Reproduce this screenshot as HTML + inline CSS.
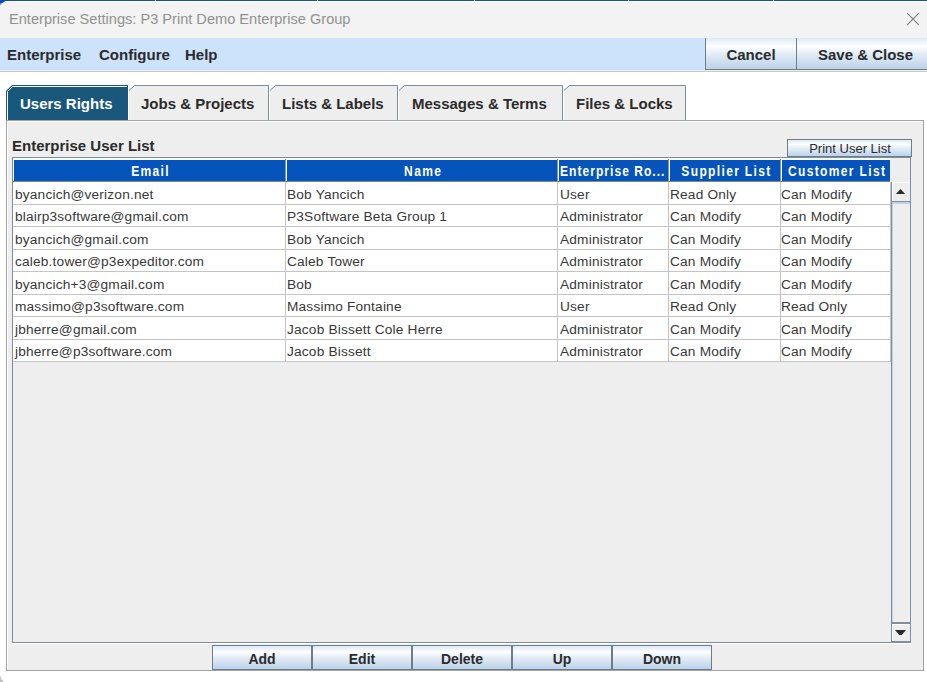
<!DOCTYPE html>
<html><head><meta charset="utf-8">
<style>
*{margin:0;padding:0;box-sizing:border-box}
html,body{width:927px;height:682px;overflow:hidden;background:#fff;font-family:"Liberation Sans",sans-serif}
.a{position:absolute}
#topstrip{left:0;top:0;width:927px;height:2px;background:#1d4f91}
#cornerbg{left:0;top:0;width:12px;height:12px;background:linear-gradient(#0a4fae 0%,#0a4fae 22%,#7d98b8 32%,#b9cde3 45%,#d5dde6 100%)}
#title{left:0;top:1px;width:927px;height:37px;background:#f3f3f3;border-top-left-radius:8px;box-shadow:inset 0 1px 0 #fcfcfc}
#titletext{left:9px;top:10px;font-size:14.6px;color:#919191;white-space:nowrap;line-height:18px}
#menubar{left:0;top:38px;width:927px;height:33px;background:#cde2fb;border-bottom:1px solid #ececec}
#menuline{left:0;top:71px;width:927px;height:1px;background:#c9c9c9}
.menu{top:39px;height:32px;line-height:32px;font-size:15px;font-weight:bold;color:#2b2b2b;white-space:nowrap}
.btn{background:linear-gradient(#dde9f5 0%,#fdfeff 27%,#e4edf6 50%,#bbd2ea 100%);border:1px solid #6d7d8c;text-align:center;font-weight:bold;color:#2b2b2b;white-space:nowrap}
.tablbl{top:86.5px;height:34px;font-size:15px;font-weight:bold;color:#2b2b2b;line-height:34px;white-space:nowrap}
#panel{left:6px;top:120px;width:918px;height:551px;background:#eeeeee;border:1px solid #a3a3a3;box-shadow:inset 1px 1px 0 #fff}
.cell{position:absolute;font-size:13.7px;letter-spacing:0.18px;color:#383838;white-space:nowrap;line-height:22px;margin-top:2px}
.hd{position:absolute;top:160px;height:21px;background:#0454bb;color:#fff;font-weight:bold;font-size:14px;letter-spacing:1.55px;line-height:23px;padding-left:3px;text-align:center;white-space:nowrap;overflow:hidden}
.hs{display:inline-block;transform:scaleX(0.86);transform-origin:50% 50%;margin:0 -30px}
</style></head><body>
<div id="topstrip" class="a"></div>
<div id="cornerbg" class="a"></div>
<div class="a" style="left:155px;top:0;width:1px;height:2px;background:#b9c3cf"></div><div class="a" style="left:317px;top:0;width:1px;height:2px;background:#b9c3cf"></div><div class="a" style="left:474px;top:0;width:1px;height:2px;background:#b9c3cf"></div><div class="a" style="left:628px;top:0;width:1px;height:2px;background:#b9c3cf"></div><div class="a" style="left:773px;top:0;width:1px;height:2px;background:#b9c3cf"></div>
<div id="title" class="a"></div>
<div id="titletext" class="a">Enterprise Settings: P3 Print Demo Enterprise Group</div>
<svg class="a" style="left:905px;top:11px" width="16" height="16" viewBox="0 0 16 16"><path d="M2.2 2.2 L13.8 13.8 M13.8 2.2 L2.2 13.8" stroke="#7a7a7a" stroke-width="1.1"/></svg>
<div id="menubar" class="a"></div>
<div id="menuline" class="a"></div>
<div class="a menu" style="left:7px">Enterprise</div>
<div class="a menu" style="left:99px">Configure</div>
<div class="a menu" style="left:185px">Help</div>
<div class="a btn" style="left:705px;top:38px;width:91px;height:32px;line-height:34px;font-size:15px;border-top:none;border-right:none">Cancel</div>
<div class="a btn" style="left:796px;top:38px;width:138px;height:32px;line-height:34px;font-size:15px;border-top:none;border-right:none">Save &amp; Close</div>

<div id="panel" class="a"></div>
<!--TABS-->
<svg class="a" style="left:0;top:0" width="927" height="130">
<path d="M128 120 L128 91 L134 85 L269 85 L269 120 Z" fill="#eeeeee"/>
<path d="M128.5 120 L128.5 91" stroke="#ffffff" stroke-width="1" fill="none"/>
<path d="M129 90.5 L134.5 85.5 L268.5 85.5 L268.5 120" stroke="#7b8c9c" stroke-width="1" fill="none"/>
<path d="M269 120 L269 91 L275 85 L398 85 L398 120 Z" fill="#eeeeee"/>
<path d="M269.5 120 L269.5 91" stroke="#ffffff" stroke-width="1" fill="none"/>
<path d="M270 90.5 L275.5 85.5 L397.5 85.5 L397.5 120" stroke="#7b8c9c" stroke-width="1" fill="none"/>
<path d="M398 120 L398 91 L404 85 L563 85 L563 120 Z" fill="#eeeeee"/>
<path d="M398.5 120 L398.5 91" stroke="#ffffff" stroke-width="1" fill="none"/>
<path d="M399 90.5 L404.5 85.5 L562.5 85.5 L562.5 120" stroke="#7b8c9c" stroke-width="1" fill="none"/>
<path d="M563 120 L563 91 L569 85 L686 85 L686 120 Z" fill="#eeeeee"/>
<path d="M563.5 120 L563.5 91" stroke="#ffffff" stroke-width="1" fill="none"/>
<path d="M564 90.5 L569.5 85.5 L685.5 85.5 L685.5 120" stroke="#7b8c9c" stroke-width="1" fill="none"/>
<path d="M6 120 L6 91 L12 85 L128 85 L128 120 Z" fill="#1a577c"/>
<path d="M7.5 120 L7.5 91.5 L12.5 86.5 L127 86.5" stroke="#ffffff" stroke-width="1" fill="none"/>
</svg>
<div class="a tablbl" style="left:141px">Jobs &amp; Projects</div>
<div class="a tablbl" style="left:282px">Lists &amp; Labels</div>
<div class="a tablbl" style="left:412px">Messages &amp; Terms</div>
<div class="a tablbl" style="left:576px">Files &amp; Locks</div>
<div class="a tablbl" style="left:20px;color:#fff">Users Rights</div>

<div class="a" style="left:12px;top:137px;font-size:15px;font-weight:bold;color:#2b2b2b;line-height:18px">Enterprise User List</div>
<div class="a btn" style="left:787px;top:139px;width:125px;height:18px;font-size:13px;font-weight:normal;line-height:18px;color:#2b2b2b;padding-left:1px">Print User List</div>

<!-- scroll pane -->
<div class="a" style="left:12px;top:157px;width:899px;height:486px;border:1px solid #7d8c9a;background:#eeeeee;box-shadow:0 1px 0 #fff"></div>
<div class="a" style="left:13px;top:158px;width:878px;height:2px;background:#fff"></div>
<div id="rows" class="a" style="left:13px;top:182px;width:877px;height:180px;background:#fff"></div>

<!-- scrollbar -->
<div class="a" style="left:891px;top:182px;width:20px;height:460px;background:#eeeeee;border-left:1px solid #7d8fa0;border-right:1px solid #7d8fa0"></div>
<div class="a" style="left:892px;top:203px;width:1px;height:419px;background:#bcd3ea"></div>
<div class="a" style="left:892px;top:201px;width:18px;height:1px;background:#7d8fa0"></div>
<div class="a" style="left:892px;top:202px;width:18px;height:2px;background:#bcd3ea"></div>
<div class="a" style="left:892px;top:622px;width:18px;height:2px;background:#7d8fa0"></div>
<svg class="a" style="left:895px;top:187px" width="11" height="8"><path d="M0.9 6.9 L10.1 6.9 L5.5 1.9 Z" fill="#2a2a2a"/></svg>
<svg class="a" style="left:894px;top:629px" width="13" height="8"><path d="M1 1 L12.1 1 L7.7 6 L5.3 6 Z" fill="#2a2a2a"/></svg>
<div class="a" style="left:892px;top:182px;width:18px;height:1px;background:#fff"></div>
<div class="a" style="left:892px;top:182px;width:1px;height:19px;background:#fff"></div>
<div class="a" style="left:892px;top:624px;width:18px;height:1px;background:#fff"></div>
<div class="a" style="left:892px;top:624px;width:1px;height:17px;background:#fff"></div>
<div class="a" style="left:892px;top:641px;width:19px;height:1px;background:#7d8fa0"></div>
<div class="a" style="left:890px;top:182px;width:1px;height:180px;background:#c4c4c4"></div>
<!-- bottom buttons -->
<div class="a btn" style="left:212px;top:645px;width:100px;height:25px;font-size:14px;line-height:27px">Add</div>
<div class="a btn" style="left:312px;top:645px;width:100px;height:25px;font-size:14px;line-height:27px">Edit</div>
<div class="a btn" style="left:412px;top:645px;width:100px;height:25px;font-size:14px;line-height:27px">Delete</div>
<div class="a btn" style="left:512px;top:645px;width:100px;height:25px;font-size:14px;line-height:27px">Up</div>
<div class="a btn" style="left:612px;top:645px;width:100px;height:25px;font-size:14px;line-height:27px">Down</div>
<!--TABLE-->
<div class="hd" style="left:13px;width:272px;border-left:1px solid #fff"><span class="hs">Email</span></div>
<div class="hd" style="left:286px;width:271px;border-left:1px solid #fff"><span class="hs">Name</span></div>
<div class="a" style="left:285px;top:159px;width:1px;height:22px;background:#8a8f99"></div>
<div class="hd" style="left:558px;width:110px;border-left:1px solid #fff;text-align:left;padding-left:1px"><span class="hs" style="transform-origin:0 50%;margin:0;letter-spacing:1.2px">Enterprise Ro...</span></div>
<div class="a" style="left:557px;top:159px;width:1px;height:22px;background:#8a8f99"></div>
<div class="hd" style="left:669px;width:111px;border-left:1px solid #fff"><span class="hs">Supplier List</span></div>
<div class="a" style="left:668px;top:159px;width:1px;height:22px;background:#8a8f99"></div>
<div class="hd" style="left:781px;width:109px;border-left:1px solid #fff"><span class="hs">Customer List</span></div>
<div class="a" style="left:780px;top:159px;width:1px;height:22px;background:#8a8f99"></div>
<div class="a" style="left:13px;top:181px;width:877px;height:1px;background:#7f8792"></div>
<div class="a" style="left:13px;top:204px;width:877px;height:1px;background:#c4c4c4"></div>
<div class="a" style="left:13px;top:226px;width:877px;height:1px;background:#c4c4c4"></div>
<div class="a" style="left:13px;top:249px;width:877px;height:1px;background:#c4c4c4"></div>
<div class="a" style="left:13px;top:271px;width:877px;height:1px;background:#c4c4c4"></div>
<div class="a" style="left:13px;top:294px;width:877px;height:1px;background:#c4c4c4"></div>
<div class="a" style="left:13px;top:316px;width:877px;height:1px;background:#c4c4c4"></div>
<div class="a" style="left:13px;top:339px;width:877px;height:1px;background:#c4c4c4"></div>
<div class="a" style="left:13px;top:361px;width:877px;height:1px;background:#c4c4c4"></div>
<div class="a" style="left:285px;top:182px;width:1px;height:180px;background:#c4c4c4"></div>
<div class="a" style="left:557px;top:182px;width:1px;height:180px;background:#c4c4c4"></div>
<div class="a" style="left:668px;top:182px;width:1px;height:180px;background:#c4c4c4"></div>
<div class="a" style="left:780px;top:182px;width:1px;height:180px;background:#c4c4c4"></div>
<div class="cell" style="left:15px;top:182px">byancich@verizon.net</div>
<div class="cell" style="left:287px;top:182px">Bob Yancich</div>
<div class="cell" style="left:560px;top:182px">User</div>
<div class="cell" style="left:670px;top:182px">Read Only</div>
<div class="cell" style="left:781px;top:182px">Can Modify</div>
<div class="cell" style="left:15px;top:204px">blairp3software@gmail.com</div>
<div class="cell" style="left:287px;top:204px">P3Software Beta Group 1</div>
<div class="cell" style="left:560px;top:204px">Administrator</div>
<div class="cell" style="left:670px;top:204px">Can Modify</div>
<div class="cell" style="left:781px;top:204px">Can Modify</div>
<div class="cell" style="left:15px;top:227px">byancich@gmail.com</div>
<div class="cell" style="left:287px;top:227px">Bob Yancich</div>
<div class="cell" style="left:560px;top:227px">Administrator</div>
<div class="cell" style="left:670px;top:227px">Can Modify</div>
<div class="cell" style="left:781px;top:227px">Can Modify</div>
<div class="cell" style="left:15px;top:249px">caleb.tower@p3expeditor.com</div>
<div class="cell" style="left:287px;top:249px">Caleb Tower</div>
<div class="cell" style="left:560px;top:249px">Administrator</div>
<div class="cell" style="left:670px;top:249px">Can Modify</div>
<div class="cell" style="left:781px;top:249px">Can Modify</div>
<div class="cell" style="left:15px;top:272px">byancich+3@gmail.com</div>
<div class="cell" style="left:287px;top:272px">Bob</div>
<div class="cell" style="left:560px;top:272px">Administrator</div>
<div class="cell" style="left:670px;top:272px">Can Modify</div>
<div class="cell" style="left:781px;top:272px">Can Modify</div>
<div class="cell" style="left:15px;top:294px">massimo@p3software.com</div>
<div class="cell" style="left:287px;top:294px">Massimo Fontaine</div>
<div class="cell" style="left:560px;top:294px">User</div>
<div class="cell" style="left:670px;top:294px">Read Only</div>
<div class="cell" style="left:781px;top:294px">Read Only</div>
<div class="cell" style="left:15px;top:317px">jbherre@gmail.com</div>
<div class="cell" style="left:287px;top:317px">Jacob Bissett Cole Herre</div>
<div class="cell" style="left:560px;top:317px">Administrator</div>
<div class="cell" style="left:670px;top:317px">Can Modify</div>
<div class="cell" style="left:781px;top:317px">Can Modify</div>
<div class="cell" style="left:15px;top:339px">jbherre@p3software.com</div>
<div class="cell" style="left:287px;top:339px">Jacob Bissett</div>
<div class="cell" style="left:560px;top:339px">Administrator</div>
<div class="cell" style="left:670px;top:339px">Can Modify</div>
<div class="cell" style="left:781px;top:339px">Can Modify</div>
<!--/TABLE-->
<svg class="a" style="left:0;top:674px" width="6" height="8"><path d="M0 2 L1 3 L1.5 5 L3.5 8 L0 8 Z" fill="#c8c8c8"/><path d="M0.5 6 L2.5 8" stroke="#a8a8a8" stroke-width="1"/></svg>
</body></html>
